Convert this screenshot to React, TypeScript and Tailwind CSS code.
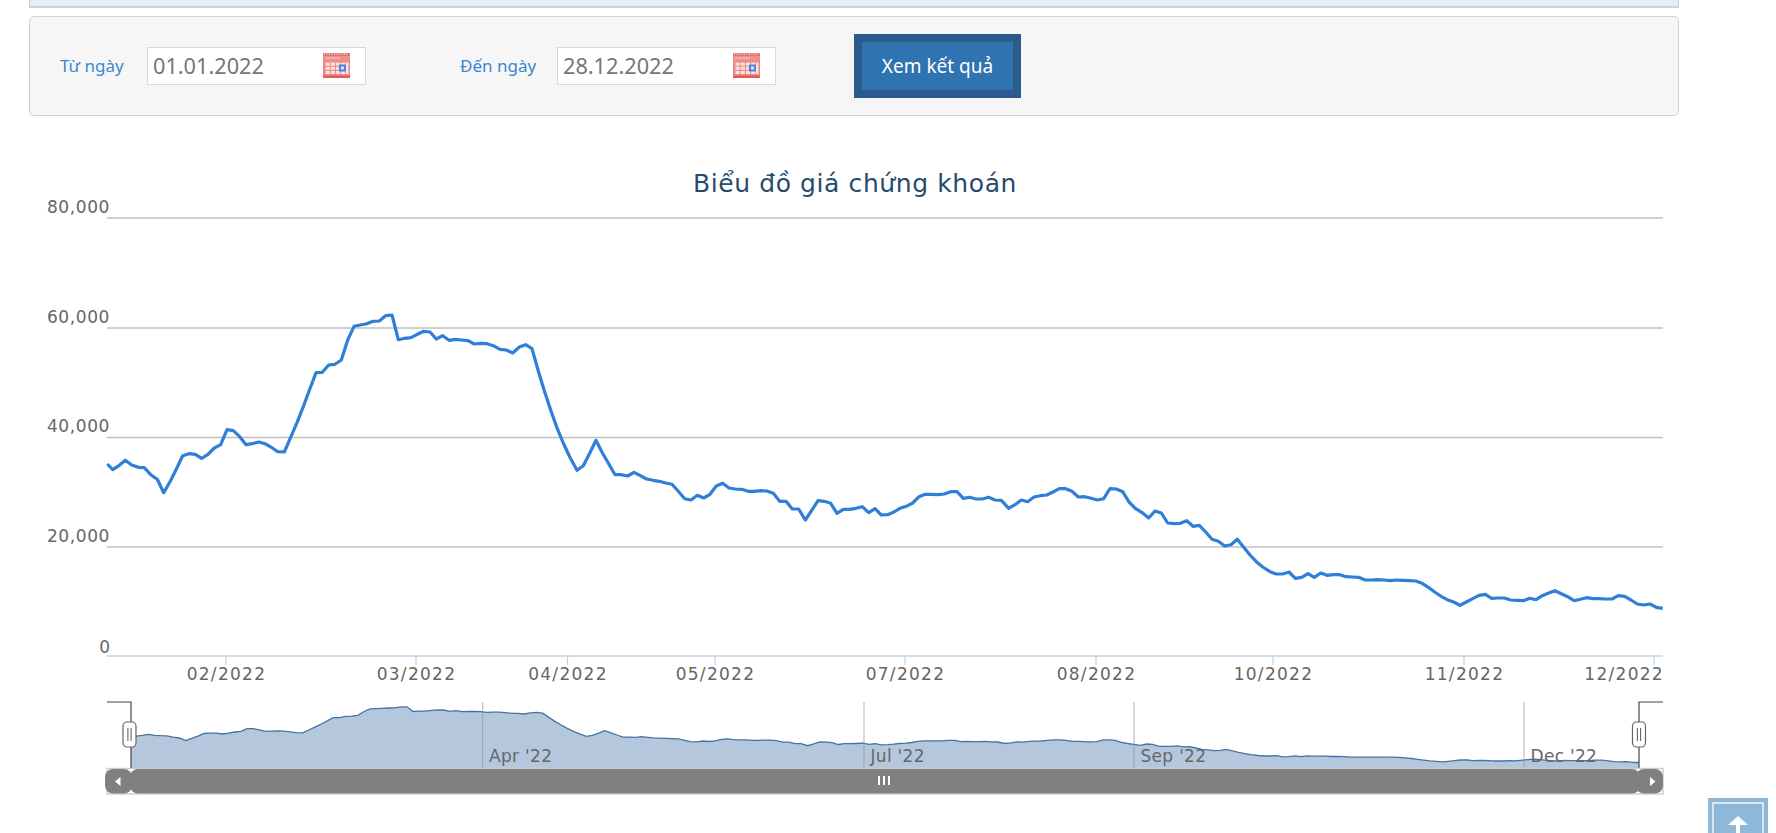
const seg1 = [[22,462],[38,479],[58,466],[76,451],[95,465],[115,472],[133,473],[152,494],[172,508],[191,548],[210,515],[229,478],[248,437],[267,431],[286,433],[305,445],[324,433],[343,414],[362,404],[381,359],[400,362],[419,380],[438,404],[457,401],[476,396],[495,401],[514,412],[533,425],[553,426],[572,382],[591,338],[610,290],[629,238],[648,188],[667,187],[686,165],[705,163],[724,150],[743,90],[762,49],[781,45],[800,41],[819,34],[838,33],[857,17],[876,15],[895,89],[914,85],[933,83],[952,73],[971,64],[990,66],[1009,87],[1028,77],[1047,91],[1066,88],[1085,90],[1104,92],[1123,102],[1142,100],[1161,101],[1180,107]];
const seg2 = [[0,58],[19,60],[38,69],[58,51],[77,44],[96,56],[115,123],[134,186],[153,243],[172,296],[191,342],[211,384],[231,421],[250,407],[269,370],[288,331],[307,368],[326,401],[345,434],[364,434],[383,438],[402,427],[421,437],[440,447],[459,451],[478,454],[497,459],[516,463],[535,484],[554,506],[573,510],[592,496],[611,504],[630,493],[649,468],[668,460],[687,474],[706,477],[725,478],[744,484],[763,484],[782,482],[801,483],[820,490],[839,514],[858,514],[877,537],[896,537],[916,570],[935,541],[954,512],[973,514],[992,520],[1011,550],[1030,538],[1049,538],[1068,535],[1087,530],[1106,548],[1125,536],[1144,555],[1163,554],[1182,546]];
const seg3 = [[0,175],[19,169],[38,159],[57,140],[76,133],[95,133],[114,134],[133,132],[152,125],[171,125],[190,145],[209,142],[228,147],[247,147],[266,142],[285,150],[304,151],[326,175],[345,164],[364,150],[383,155],[402,141],[421,137],[440,135],[459,126],[478,116],[497,116],[516,124],[535,141],[554,140],[573,145],[592,150],[611,146],[630,116],[649,117],[668,125],[687,156],[706,175],[725,187],[746,204],[765,183],[784,189],[803,219],[822,221],[841,220],[860,212],[879,229],[898,226],[917,246],[936,268],[955,274],[974,288],[993,284],[1012,268],[1031,292],[1050,315],[1069,335],[1088,351]];
const seg4 = [[0,215],[19,222],[38,222],[57,216],[76,235],[95,232],[114,221],[133,232],[152,219],[171,226],[190,224],[209,224],[228,230],[247,231],[266,232],[285,240],[304,240],[323,239],[342,240],[361,242],[380,240],[399,241],[418,242],[437,243],[456,250],[475,262],[494,276],[513,289],[532,299],[551,306],[570,316],[589,306],[608,296],[627,286],[646,283],[665,295],[684,294],[703,294],[722,300],[741,301],[760,302],[779,295],[798,299],[817,287],[836,279],[855,272],[874,281],[893,290],[912,302],[931,298],[950,293],[969,296],[988,296],[1007,297],[1026,297],[1045,287],[1064,289],[1083,300],[1102,312],[1121,315],[1140,312],[1159,322],[1178,325]];

// points were read off the screenshot in 3x crops, back to page coords here
const toPage = (pts: number[][], ox: number, oy: number) =>
  pts.map(([x, y]) => [ox + x / 3, oy + y / 3]);

const points = [
  ...toPage(seg1, 100, 310),
  ...toPage(seg2, 500, 330),
  ...toPage(seg3, 900, 450),
  ...toPage(seg4, 1270, 500),
];

const navPoints = points.map(([x, y]) => [
  131 + (x - 107.3) * (1508 / 1555.7),
  771.5 - (655.7 - y) * 0.19,
]);

const toPath = (pts: number[][]) =>
  pts.map(([x, y], i) => `${i === 0 ? "M" : "L"}${x.toFixed(1)} ${y.toFixed(1)}`).join(" ");

const chartFont = { fontFamily: "'DejaVu Sans', sans-serif" };

const gridRows = [
  { y: 218, label: "80,000" },
  { y: 328, label: "60,000" },
  { y: 437.5, label: "40,000" },
  { y: 547, label: "20,000" },
];

const monthTicks = [
  { x: 226, label: "02/2022" },
  { x: 416, label: "03/2022" },
  { x: 567.5, label: "04/2022" },
  { x: 715, label: "05/2022" },
  { x: 905, label: "07/2022" },
  { x: 1096, label: "08/2022" },
  { x: 1273, label: "10/2022" },
  { x: 1464, label: "11/2022" },
  { x: 1654, label: "12/2022" },
];

const navLabels = [
  { x: 482.6, label: "Apr '22" },
  { x: 864, label: "Jul '22" },
  { x: 1134, label: "Sep '22" },
  { x: 1524, label: "Dec '22" },
];

function CalendarIcon() {
  const cols = [2.5, 7.7, 12.9, 18.1];
  const rows = [9.5, 13.7, 17.9];
  return (
    <svg width="27" height="25" viewBox="0 0 27 25" className="shrink-0">
      <rect x="0" y="0" width="27" height="25" fill="#ee8783" />
      <rect x="0" y="0" width="27" height="3" fill="#e27471" />
      <line x1="1" x2="26" y1="1" y2="1" stroke="#fff" strokeWidth="1" strokeDasharray="1 1.5" />
      <rect x="0" y="3" width="27" height="5.5" fill="#ee8f8b" />
      <rect x="2" y="4.5" width="15" height="1" fill="#f9c6c2" />
      {rows.map((r) =>
        cols.map((c) => <rect key={`${r}-${c}`} x={c} y={r} width="4.2" height="3.2" fill="#fce0dd" />)
      )}
      <rect x="23" y="9.5" width="2.5" height="11.6" fill="#fce0dd" />
      <rect x="0" y="22.5" width="27" height="2.5" fill="#d9605c" />
      <rect x="16" y="11.5" width="7" height="7" fill="#4f82e2" />
      <rect x="18" y="13.5" width="3" height="3" fill="#d5e3fb" />
    </svg>
  );
}

function DateField({ label, value, labelClass }: { label: string; value: string; labelClass: string }) {
  return (
    <div className="flex items-center">
      <span className={`text-[17px] text-[#3b86d1] ${labelClass}`}>{label}</span>
      <div className="flex h-[38px] w-[219px] items-center justify-between border border-[#d8d8d8] bg-white pl-[5px] pr-[15px]">
        <span className="pt-[1px] text-[21.7px] text-[#767676]">{value}</span>
        <CalendarIcon />
      </div>
    </div>
  );
}

function HandleGrip({ x }: { x: number }) {
  return (
    <g>
      <rect x={x - 6.5} y="722" width="13" height="25" rx="4" fill="#fff" stroke="#666" strokeWidth="1.2" />
      <path d={`M${x - 1.6} 728V741M${x + 1.6} 728V741`} stroke="#666" strokeWidth="1.1" />
    </g>
  );
}

function StockChart() {
  return (
    <svg width="1776" height="717" viewBox="0 116 1776 717" className="block" style={chartFont}>
      <text x="855" y="192" textAnchor="middle" fontSize="25" letterSpacing="0.6" fill="#274b6d">
        Biểu đồ giá chứng khoán
      </text>

      {gridRows.map((row) => (
        <g key={row.label}>
          <line x1="107" x2="1663" y1={row.y} y2={row.y} stroke="#c0c0c0" strokeWidth="1.3" />
          <text x="110" y={row.y - 5.2} textAnchor="end" fontSize="17" letterSpacing="0.6" fill="#666">
            {row.label}
          </text>
        </g>
      ))}
      <text x="110" y="653" textAnchor="end" fontSize="17" fill="#666">0</text>

      <line x1="107" x2="1663" y1="656" y2="656" stroke="#c0d0e0" strokeWidth="1.5" />
      {monthTicks.map((tick) => (
        <g key={tick.label}>
          <line x1={tick.x} x2={tick.x} y1="656" y2="665" stroke="#c0d0e0" strokeWidth="1.2" />
          <text
            x={tick.label === "12/2022" ? 1664 : tick.x + 0.5}
            y="679.5"
            textAnchor={tick.label === "12/2022" ? "end" : "middle"}
            fontSize="17"
            letterSpacing="1.3"
            fill="#666"
          >
            {tick.label}
          </text>
        </g>
      ))}

      <path d={toPath(points)} fill="none" stroke="#2f7ed8" strokeWidth="3.2" strokeLinejoin="round" />

      {/* navigator */}
      <path
        d={`${toPath(navPoints)} L1639 768 L131 768 Z`}
        fill="#4572a7"
        fillOpacity="0.4"
      />
      <path d={toPath(navPoints)} fill="none" stroke="#4572a7" strokeWidth="1.3" />
      {navLabels.map((item) => (
        <g key={item.label}>
          <line x1={item.x} x2={item.x} y1="702" y2="768" stroke="#8c98a8" strokeOpacity="0.6" strokeWidth="1.2" />
          <text x={item.x + 6.5} y="762.3" fontSize="17" letterSpacing="0.3" fill="#666">
            {item.label}
          </text>
        </g>
      ))}
      <path d="M107 702H131V768M1663 702H1639V768" fill="none" stroke="#444" strokeWidth="1.2" />
      <HandleGrip x={129.5} />
      <HandleGrip x={1639} />

      {/* scrollbar */}
      <rect x="107" y="768.5" width="1556" height="25.5" fill="#fff" stroke="#cccccc" strokeWidth="1.4" />
      <rect x="105" y="769" width="27" height="24.5" rx="8" fill="#808080" />
      <rect x="1636" y="769" width="27" height="24.5" rx="8" fill="#808080" />
      <rect x="130" y="769" width="1510" height="24.5" rx="8" fill="#808080" />
      <path d="M120.5 777V786L115 781.5Z M1650 777V786L1655.5 781.5Z" fill="#fff" />
      <path d="M879 776V785M884 776V785M889 776V785" stroke="#fff" strokeWidth="2" />
    </svg>
  );
}

export default function App() {
  return (
    <div className="relative h-[833px] w-[1776px] overflow-hidden bg-white font-['Noto_Sans',sans-serif]">
      <div className="ml-[29px] h-2 w-[1650px] border-x border-b-2 border-[#c5d5e0] bg-[#e3eef5]" />

      <div className="ml-[29px] mt-2 flex h-[100px] w-[1650px] items-center rounded-[5px] border border-[#d2d2d2] bg-[#f6f6f6] pb-[1px]">
        <div className="ml-[30px]">
          <DateField label="Từ ngày" value="01.01.2022" labelClass="w-[87px]" />
        </div>
        <div className="ml-[94px]">
          <DateField label="Đến ngày" value="28.12.2022" labelClass="w-[97px]" />
        </div>
        <button className="ml-[78px] h-[64px] w-[167px] border-[8px] border-[#2a5b8c] bg-[#2f73b0] pt-[2px] text-[19px] text-white">
          Xem kết quả
        </button>
      </div>

      <StockChart />

      <div className="fixed left-[1708px] top-[798px] h-[60px] w-[60px] bg-[#8fb8d8] p-[4px]">
        <div className="h-full w-full border-2 border-[#d8e7f2]">
          <svg width="24" height="32" viewBox="0 0 24 32" className="ml-[12px] mt-[12px]">
            <path d="M12 0L22 9H14V32H10V9H2Z" fill="#fff" />
          </svg>
        </div>
      </div>
    </div>
  );
}
